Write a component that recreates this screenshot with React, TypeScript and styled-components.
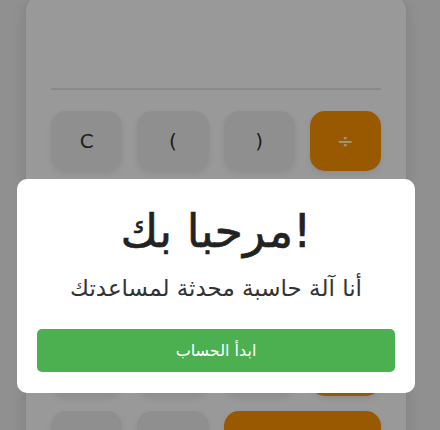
import React from 'react';
import styled, { createGlobalStyle, css } from 'styled-components';

const GlobalStyle = createGlobalStyle`
  * { box-sizing: border-box; }
  body {
    margin: 0;
    background: #f0f0f2;
    font-family: "DejaVu Sans", "Noto Sans", sans-serif;
    overflow: hidden;
  }
`;

const Page = styled.div`
  position: relative;
  display: flex;
  justify-content: center;
  padding: 0 8px 76px 0;
`;

const Calculator = styled.div`
  width: 380px;
  margin-top: -8px;
  padding: 25px;
  background: #ffffff;
  border-radius: 20px;
  box-shadow: 0 4px 16px rgba(0, 0, 0, 0.12);
`;

const Display = styled.div`
  height: 73px;
  margin-bottom: 21px;
  border-bottom: 2px solid #e6e6e6;
`;

const Keys = styled.div`
  display: grid;
  grid-template-columns: repeat(4, 1fr);
  grid-auto-rows: 60px;
  gap: 15px;
`;

const Key = styled.button<{ $accent?: boolean; $wide?: boolean }>`
  border: none;
  border-radius: 15px;
  background: #eeeeee;
  color: #333333;
  font-family: "DejaVu Sans", sans-serif;
  font-size: 20px;
  box-shadow: 0 3px 6px rgba(0, 0, 0, 0.08);
  cursor: pointer;

  ${({ $accent }) => $accent && css`
    background: #ff9500;
    color: #ffffff;
  `}

  ${({ $wide }) => $wide && css`
    grid-column: span 2;
  `}
`;

const Overlay = styled.div`
  position: absolute;
  inset: 0;
  display: flex;
  align-items: center;
  justify-content: center;
  padding-right: 8px;
  background: rgba(0, 0, 0, 0.4);
`;

const Modal = styled.div`
  width: 398px;
  padding: 24px 20px 21px;
  background: #ffffff;
  border-radius: 10px;
  text-align: center;
`;

const Title = styled.h1`
  margin: 0 0 13px;
  font-size: 46px;
  font-weight: normal;
  line-height: 1.25;
  color: #222222;
  -webkit-text-stroke: 0.6px #222222;
`;

const Subtitle = styled.p`
  margin: 0 0 25px;
  font-size: 23px;
  line-height: 1.3;
  color: #333333;
`;

const StartButton = styled.button`
  display: block;
  width: 100%;
  height: 43px;
  border: none;
  border-radius: 5px;
  background: #4caf50;
  color: #ffffff;
  font-family: "DejaVu Sans", sans-serif;
  font-size: 16px;
  cursor: pointer;
`;

const keys: { label: string; accent?: boolean; wide?: boolean }[] = [
  { label: 'C' }, { label: '(' }, { label: ')' }, { label: '÷', accent: true },
  { label: '7' }, { label: '8' }, { label: '9' }, { label: '×', accent: true },
  { label: '4' }, { label: '5' }, { label: '6' }, { label: '−', accent: true },
  { label: '1' }, { label: '2' }, { label: '3' }, { label: '+', accent: true },
  { label: '0' }, { label: '.' }, { label: '=', accent: true, wide: true },
];

export default function App() {
  return (
    <>
      <GlobalStyle />
      <Page>
        <Calculator>
          <Display />
          <Keys>
            {keys.map((k) => (
              <Key key={k.label} $accent={k.accent} $wide={k.wide}>{k.label}</Key>
            ))}
          </Keys>
        </Calculator>
        <Overlay>
          <Modal>
            <Title>مرحبا بك!</Title>
            <Subtitle>أنا آلة حاسبة محدثة لمساعدتك</Subtitle>
            <StartButton>ابدأ الحساب</StartButton>
          </Modal>
        </Overlay>
      </Page>
    </>
  );
}
